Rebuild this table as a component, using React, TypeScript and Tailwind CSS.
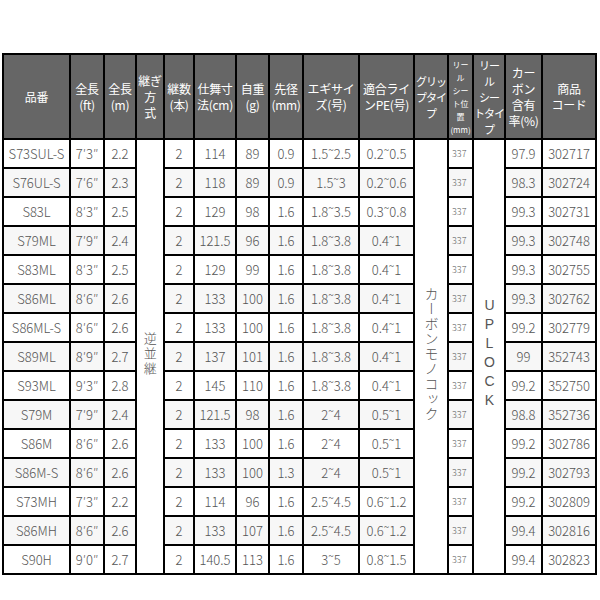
const widths = [67, 34, 32, 28, 30, 42, 33, 34, 56, 55, 34, 25, 32, 37, 54];

type Rod = {
  name: string;
  ft: string;
  m: string;
  pcs: string;
  closed: string;
  weight: string;
  tip: string;
  egi: string;
  pe: string;
  seat: string;
  carbon: string;
  code: string;
};

const rods: Rod[] = [
  { name: "S73SUL-S", ft: "7′3″", m: "2.2", pcs: "2", closed: "114", weight: "89", tip: "0.9", egi: "1.5˜2.5", pe: "0.2˜0.5", seat: "337", carbon: "97.9", code: "302717" },
  { name: "S76UL-S", ft: "7′6″", m: "2.3", pcs: "2", closed: "118", weight: "89", tip: "0.9", egi: "1.5˜3", pe: "0.2˜0.6", seat: "337", carbon: "98.3", code: "302724" },
  { name: "S83L", ft: "8′3″", m: "2.5", pcs: "2", closed: "129", weight: "98", tip: "1.6", egi: "1.8˜3.5", pe: "0.3˜0.8", seat: "337", carbon: "99.3", code: "302731" },
  { name: "S79ML", ft: "7′9″", m: "2.4", pcs: "2", closed: "121.5", weight: "96", tip: "1.6", egi: "1.8˜3.8", pe: "0.4˜1", seat: "337", carbon: "99.3", code: "302748" },
  { name: "S83ML", ft: "8′3″", m: "2.5", pcs: "2", closed: "129", weight: "99", tip: "1.6", egi: "1.8˜3.8", pe: "0.4˜1", seat: "337", carbon: "99.3", code: "302755" },
  { name: "S86ML", ft: "8′6″", m: "2.6", pcs: "2", closed: "133", weight: "100", tip: "1.6", egi: "1.8˜3.8", pe: "0.4˜1", seat: "337", carbon: "99.3", code: "302762" },
  { name: "S86ML-S", ft: "8′6″", m: "2.6", pcs: "2", closed: "133", weight: "100", tip: "1.6", egi: "1.8˜3.8", pe: "0.4˜1", seat: "337", carbon: "99.2", code: "302779" },
  { name: "S89ML", ft: "8′9″", m: "2.7", pcs: "2", closed: "137", weight: "101", tip: "1.6", egi: "1.8˜3.8", pe: "0.4˜1", seat: "337", carbon: "99", code: "352743" },
  { name: "S93ML", ft: "9′3″", m: "2.8", pcs: "2", closed: "145", weight: "110", tip: "1.6", egi: "1.8˜3.8", pe: "0.4˜1", seat: "337", carbon: "99.2", code: "352750" },
  { name: "S79M", ft: "7′9″", m: "2.4", pcs: "2", closed: "121.5", weight: "98", tip: "1.6", egi: "2˜4", pe: "0.5˜1", seat: "337", carbon: "98.8", code: "352736" },
  { name: "S86M", ft: "8′6″", m: "2.6", pcs: "2", closed: "133", weight: "100", tip: "1.6", egi: "2˜4", pe: "0.5˜1", seat: "337", carbon: "99.2", code: "302786" },
  { name: "S86M-S", ft: "8′6″", m: "2.6", pcs: "2", closed: "133", weight: "100", tip: "1.3", egi: "2˜4", pe: "0.5˜1", seat: "337", carbon: "99.2", code: "302793" },
  { name: "S73MH", ft: "7′3″", m: "2.2", pcs: "2", closed: "114", weight: "96", tip: "1.6", egi: "2.5˜4.5", pe: "0.6˜1.2", seat: "337", carbon: "99.2", code: "302809" },
  { name: "S86MH", ft: "8′6″", m: "2.6", pcs: "2", closed: "133", weight: "107", tip: "1.6", egi: "2.5˜4.5", pe: "0.6˜1.2", seat: "337", carbon: "99.4", code: "302816" },
  { name: "S90H", ft: "9′0″", m: "2.7", pcs: "2", closed: "140.5", weight: "113", tip: "1.6", egi: "3˜5", pe: "0.8˜1.5", seat: "337", carbon: "99.4", code: "302823" },
];

const headers: string[][] = [
  ["品番"],
  ["全長", "(ft)"],
  ["全長", "(m)"],
  ["継ぎ", "方", "式"],
  ["継数", "(本)"],
  ["仕舞寸", "法(cm)"],
  ["自重", "(g)"],
  ["先径", "(mm)"],
  ["エギサイ", "ズ(号)"],
  ["適合ライ", "ンPE(号)"],
  ["グリッ", "プタイ", "プ"],
  ["リー", "ル", "シー", "ト位", "置", "(mm)"],
  ["リー", "ル", "シー", "トタイ", "プ"],
  ["カー", "ボン", "含有", "率(%)"],
  ["商品", "コード"],
];

const cell = "border-2 border-black text-center align-middle p-0 whitespace-nowrap overflow-hidden";

export default function App() {
  return (
    <div className="w-[600px] h-[600px] bg-white pt-[53px] pl-[2px] font-['Noto_Sans_CJK_JP','Noto_Sans',sans-serif]">
      <table className="table-fixed border-collapse w-[594px]">
        <colgroup>
          {widths.map((w, i) => (
            <col key={i} style={{ width: w }} />
          ))}
        </colgroup>
        <thead>
          <tr className="h-[85px] bg-[#666666] text-white">
            {headers.map((lines, i) => (
              <th
                key={i}
                className={`${cell} font-normal ${
                  i === 11
                    ? "text-[8px] leading-[13px]"
                    : i === 10 || i === 12
                    ? "text-[11px] leading-[16px] tracking-[-1px]"
                    : "text-[12px] leading-[16px] tracking-[-0.3px]"
                }`}
              >
                {lines.map((l, j) => (
                  <div key={j}>{l}</div>
                ))}
              </th>
            ))}
          </tr>
        </thead>
        <tbody className="text-[#555555] text-[13px] font-light">
          {rods.map((r, i) => (
            <tr key={r.code} className={`h-[29px] ${i % 2 === 1 ? "bg-[#f7f7f7]" : "bg-white"}`}>
              <td className={cell}>{r.name}</td>
              <td className={cell}>{r.ft}</td>
              <td className={cell}>{r.m}</td>
              {i === 0 && (
                <td rowSpan={15} className={`${cell} bg-white`}>
                  <span className="[writing-mode:vertical-rl] inline-block text-[13px] tracking-[2px]">逆並継</span>
                </td>
              )}
              <td className={cell}>{r.pcs}</td>
              <td className={cell}>{r.closed}</td>
              <td className={cell}>{r.weight}</td>
              <td className={cell}>{r.tip}</td>
              <td className={cell}>{r.egi}</td>
              <td className={cell}>{r.pe}</td>
              {i === 0 && (
                <td rowSpan={15} className={`${cell} bg-white`}>
                  <span className="[writing-mode:vertical-rl] inline-block text-[14px] tracking-[1px]">カーボンモノコック</span>
                </td>
              )}
              <td className={`${cell} text-left pl-[3px] text-[9px]`}>{r.seat}</td>
              {i === 0 && (
                <td rowSpan={15} className={`${cell} bg-white`}>
                  <span className="[writing-mode:vertical-rl] [text-orientation:upright] inline-block text-[14px] tracking-[3px] font-['Liberation_Sans',sans-serif]">UPLOCK</span>
                </td>
              )}
              <td className={cell}>{r.carbon}</td>
              <td className={cell}>{r.code}</td>
            </tr>
          ))}
        </tbody>
      </table>
    </div>
  );
}
